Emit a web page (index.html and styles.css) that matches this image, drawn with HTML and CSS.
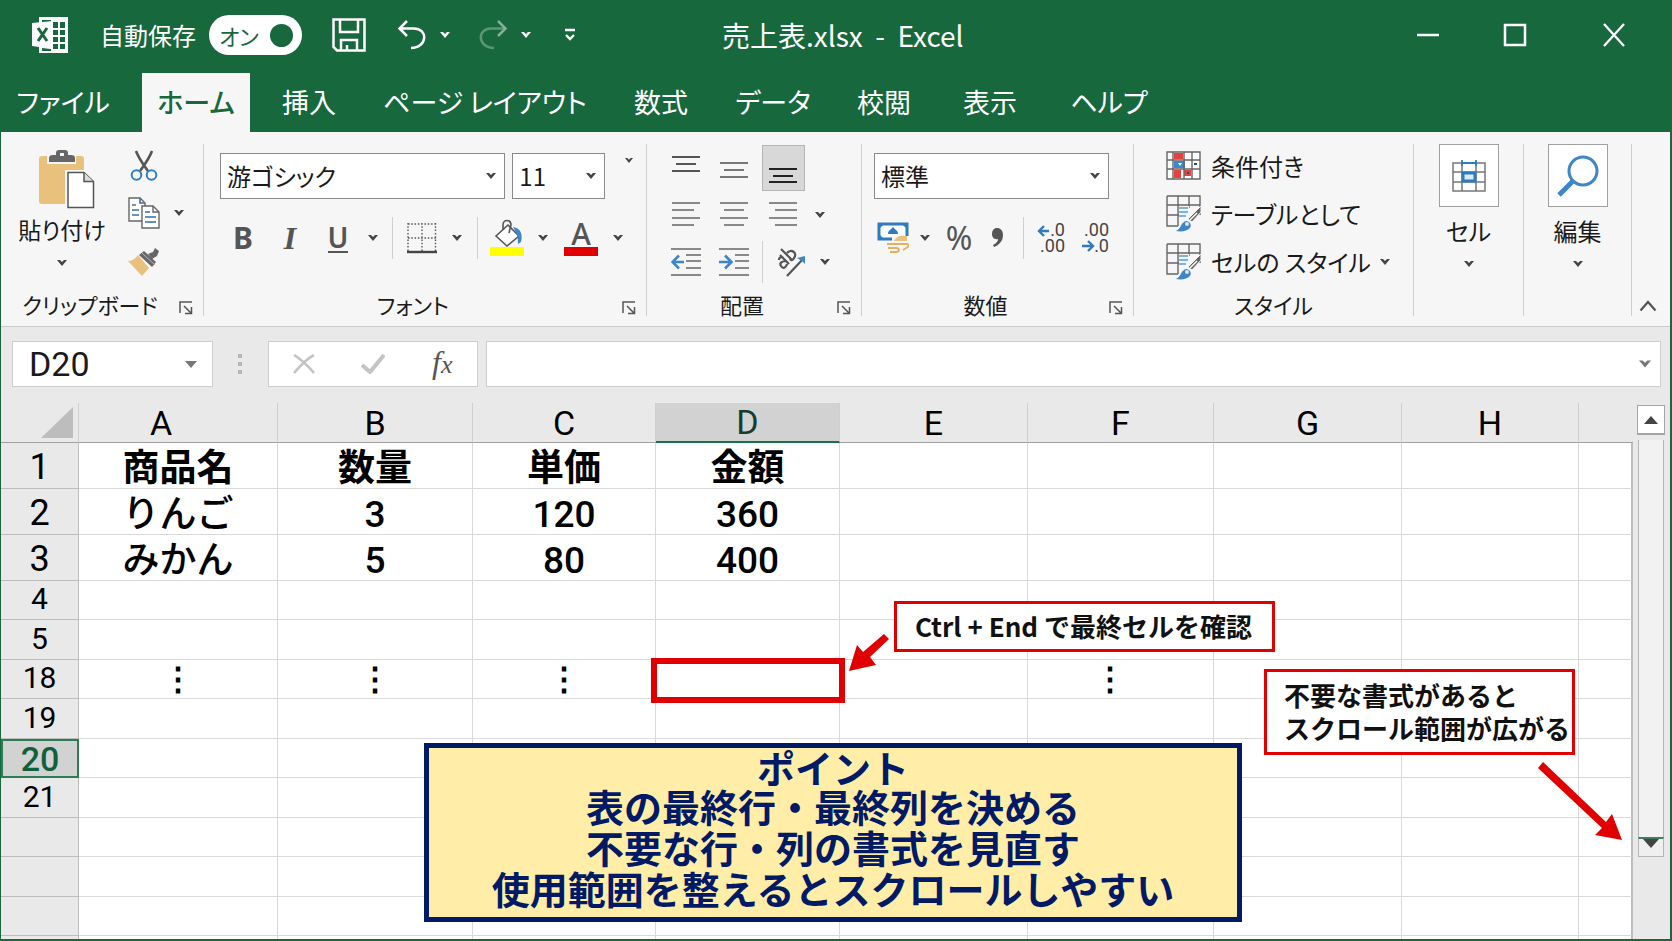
FILE: index.html
```
<!DOCTYPE html>
<html lang="ja">
<head>
    <meta charset="UTF-8">
    <meta name="viewport" content="width=device-width, initial-scale=1.0">
    <title>売上表.xlsx - Excel</title>
    <link rel="stylesheet" href="styles.css">
</head>
<body>
    <!-- Shared icon shapes -->
    <svg class="sprite" aria-hidden="true">
        <symbol id="caret" viewBox="0 0 10 6"><path d="M0 0h3l2 2 2-2h3L5 6z" fill="currentColor"/></symbol>
        <symbol id="launcher" viewBox="0 0 14 14"><path d="M1 12V1h12M5 5l7 7M12.500 6v6.500H6" fill="none" stroke="#555" stroke-width="1.500"/></symbol>
        <symbol id="table-brush" viewBox="0 0 36 37">
            <path d="M1 1h33v19M1 1v30h11M1 10h33M1 20h12M12 1v30M23 1v12" fill="none" stroke="#666" stroke-width="1.400"/>
            <path d="M13 11h10v11H13z" fill="#eef5fc"/>
            <path d="M13 13h9M13 17h9M13 21h7" stroke="#5b9bd5" stroke-width="1.500"/>
            <path d="M35 11v6l-9 10-4-3z" fill="#666" stroke="#f6f6f6" stroke-width="1"/>
            <path d="M31 18l-7 7" stroke="#fff" stroke-width="1.500"/>
            <path d="M10 36c5-2 5-9 10-10 4 0 6 4 4 7-3 3-8 4-14 3z" fill="#3f86c9"/>
            <circle cx="21" cy="29" r="2" fill="#d6e9f8"/>
        </symbol>
    </svg>

    <div class="window">
        <header class="titlebar">
            <svg class="logo" width="36" height="36" viewBox="0 0 36 36" aria-hidden="true">
                <path d="M7 0h29v36H7z" fill="#fff"/>
                <path d="M21 5h5v6h-5zM28 5h5v6h-5zM21 13h5v5h-5zM28 13h5v5h-5zM21 20h5v5h-5zM28 20h5v5h-5zM21 27h5v5h-5zM28 27h5v5h-5zM10 3h9v2h-9zM10 31l9 1v2h-9z" fill="#18683e"/>
                <path d="M0 6l21-2v28L0 29z" fill="#fff"/>
                <path d="M6 11l9 13M15 11L6 24" stroke="#18683e" stroke-width="3"/>
            </svg>
            <span class="autosave-label" id="autosave-label">自動保存</span>
            <label class="toggle">オン<input type="checkbox" aria-labelledby="autosave-label" checked></label>
            <button class="save" aria-label="上書き保存">
                <svg width="34" height="34" viewBox="0 0 34 34"><path d="M1.500 1.500h31v31H5l-3.500-3.500zM8 2v12h18V2M9 32V22h16v10M15 32v-5" fill="none" stroke="#fff" stroke-width="2.500"/></svg>
            </button>
            <button class="undo" aria-label="元に戻す">
                <svg width="28" height="30" viewBox="0 0 28 30"><path d="M9 1L1.500 8.500 9 16M2 8.500h14c14 0 14 19-3 19.500" fill="none" stroke="#fff" stroke-width="2.500"/></svg>
            </button>
            <button class="title-caret" aria-label="元に戻すの一覧"><svg class="caret"><use href="#caret"/></svg></button>
            <button class="redo" aria-label="やり直し">
                <svg width="28" height="30" viewBox="0 0 28 30"><path d="M26 8.500H12C-2 8.500-2 27.500 15 28" fill="none" stroke="#5d9577" stroke-width="2.500"/><path d="M19 1l7.500 7.500L19 16" fill="none" stroke="#86b198" stroke-width="2.500"/></svg>
            </button>
            <button class="title-caret" aria-label="やり直しの一覧"><svg class="caret"><use href="#caret"/></svg></button>
            <button class="customize" aria-label="クイック アクセス ツール バーのカスタマイズ">
                <svg width="12" height="14" viewBox="0 0 12 14"><path d="M1 2h10M2 7l4 4 4-4" fill="none" stroke="#fff" stroke-width="2.400"/></svg>
            </button>
            <h1 class="title">売上表.xlsx&nbsp; - &nbsp;Excel</h1>
            <div class="window-buttons">
                <button aria-label="最小化"><svg width="24" height="24" viewBox="0 0 24 24"><path d="M1 12h22" stroke="#fff" stroke-width="2.500"/></svg></button>
                <button aria-label="最大化"><svg width="24" height="24" viewBox="0 0 24 24"><path d="M2 2h20v20H2z" fill="none" stroke="#fff" stroke-width="2.500"/></svg></button>
                <button class="close" aria-label="閉じる"><svg width="24" height="24" viewBox="0 0 24 24"><path d="M2 1l20 22M22 1L2 23" stroke="#fff" stroke-width="2.300"/></svg></button>
            </div>
        </header>

        <nav class="tabs">
            <button>ファイル</button>
            <button class="active">ホーム</button>
            <button>挿入</button>
            <button>ページ レイアウト</button>
            <button>数式</button>
            <button>データ</button>
            <button>校閲</button>
            <button>表示</button>
            <button>ヘルプ</button>
        </nav>

        <div class="ribbon">
            <section class="group group-clipboard">
                <div class="clipboard-body">
                    <button class="paste">
                        <svg width="56" height="60" viewBox="0 0 56 60">
                            <path d="M3 6h39q3 0 3 3v42q0 3-3 3H3q-3 0-3-3V9q0-3 3-3z" fill="#eac17c"/>
                            <path d="M8 5h29v9H8z" fill="#f6f6f6"/>
                            <path d="M10 12V8q0-3 4-3h3V3q0-3 3-3h6q3 0 3 3v2h3q4 0 4 3v4z" fill="#666"/>
                            <path d="M21 3h4v3h-4z" fill="#f6f6f6"/>
                            <path d="M26 20h31v40H26z" fill="#f6f6f6"/>
                            <path d="M29 22.500h16l9.500 9v26H29z" fill="#fff" stroke="#555" stroke-width="1.500"/>
                            <path d="M45 22.500v9h9.500" fill="#ddd" stroke="#555" stroke-width="1.500"/>
                        </svg>
                        <span>貼り付け</span>
                        <svg class="caret"><use href="#caret"/></svg>
                    </button>
                    <div class="clipboard-tools">
                        <button aria-label="切り取り">
                            <svg width="28" height="32" viewBox="0 0 28 32">
                                <path d="M6 1c3 8 7 13 12 20M22 1c-3 8-7 13-12 20" stroke="#555" stroke-width="2.600" fill="none"/>
                                <circle cx="6.500" cy="25" r="4.800" fill="none" stroke="#2f7fc8" stroke-width="2"/>
                                <circle cx="21.500" cy="25" r="4.800" fill="none" stroke="#2f7fc8" stroke-width="2"/>
                            </svg>
                        </button>
                        <span></span>
                        <button aria-label="コピー">
                            <svg width="32" height="32" viewBox="0 0 32 32">
                                <path d="M1 1h11l5 5v18H1z" fill="#fff" stroke="#666" stroke-width="1.400"/>
                                <path d="M12 1v5h5M4 8h4M4 13h7M4 18h7" fill="none" stroke="#3f6f9f" stroke-width="1.600"/>
                                <path d="M14 9h11l6 6v16H14z" fill="#fff" stroke="#666" stroke-width="1.400"/>
                                <path d="M25 9v6h6" fill="none" stroke="#666" stroke-width="1.400"/>
                                <path d="M17 15h5M17 20h11M17 25h11" stroke="#2f6fae" stroke-width="1.600"/>
                            </svg>
                        </button>
                        <button aria-label="コピーの一覧"><svg class="caret"><use href="#caret"/></svg></button>
                        <button aria-label="書式のコピー/貼り付け">
                            <svg width="32" height="30" viewBox="0 0 32 30">
                                <path d="M0 14q6 0 10-6l11 13-7 8z" fill="#eac17c"/>
                                <path d="M11 8l5-4 12 11-4 5z" fill="#666"/>
                                <path d="M20 7l5-2 2-4 4 3-2 5-5 3z" fill="#666"/>
                                <path d="M14 6l13 12" stroke="#bbb" stroke-width="1"/>
                            </svg>
                        </button>
                    </div>
                </div>
                <footer><span>クリップボード</span><button aria-label="クリップボードの詳細"><svg class="launcher"><use href="#launcher"/></svg></button></footer>
            </section>

            <section class="group group-font">
                <div class="combo-row">
                    <div class="combo combo-font">
                        <select aria-label="フォント"><option>游ゴシック</option></select>
                        <svg class="caret"><use href="#caret"/></svg>
                    </div>
                    <div class="combo combo-size">
                        <select aria-label="フォント サイズ"><option>11</option></select>
                        <svg class="caret"><use href="#caret"/></svg>
                    </div>
                    <button class="font-more" aria-label="フォントその他"><svg class="caret caret-small"><use href="#caret"/></svg></button>
                </div>
                <div class="font-tools">
                    <button class="bold" aria-label="太字">B</button>
                    <button class="italic" aria-label="斜体">I</button>
                    <button class="underline" aria-label="下線"><span>U</span></button>
                    <button aria-label="下線の一覧"><svg class="caret"><use href="#caret"/></svg></button>
                    <span class="divider"></span>
                    <button aria-label="罫線">
                        <svg width="30" height="32" viewBox="0 0 30 32">
                            <path d="M1 2h28M1 16h28M1 1v28M15 1v28M28.500 1v28" fill="none" stroke="#555" stroke-width="1.400" stroke-dasharray="1.500 1.800"/>
                            <path d="M0 30h30" stroke="#444" stroke-width="2.400"/>
                        </svg>
                    </button>
                    <button aria-label="罫線の一覧"><svg class="caret"><use href="#caret"/></svg></button>
                    <span class="divider"></span>
                    <button aria-label="塗りつぶしの色">
                        <svg width="34" height="38" viewBox="0 0 34 38">
                            <path d="M6 17L18 6l11 11-12 10z" fill="#fff" stroke="#555" stroke-width="1.600"/>
                            <path d="M13 11V6c0-6 8-6 8 0l-2 8" fill="none" stroke="#555" stroke-width="1.600"/>
                            <path d="M23 8c8 1 10 8 8 15l-3 2c0-7-1-11-5-17z" fill="#3f86c9"/>
                            <path d="M0 28h34v9H0z" fill="#ffff00"/>
                        </svg>
                    </button>
                    <button aria-label="塗りつぶしの色の一覧"><svg class="caret"><use href="#caret"/></svg></button>
                    <button class="font-color" aria-label="フォントの色">A</button>
                    <button aria-label="フォントの色の一覧"><svg class="caret"><use href="#caret"/></svg></button>
                </div>
                <footer><span>フォント</span><button aria-label="フォントの詳細"><svg class="launcher"><use href="#launcher"/></svg></button></footer>
            </section>

            <section class="group group-align">
                <div class="align-row">
                    <button aria-label="上揃え"><svg width="28" height="26" viewBox="0 0 28 26"><path d="M0 2h28M4 9h20M0 16h28" stroke="#555" stroke-width="1.800"/></svg></button>
                    <button aria-label="上下中央揃え"><svg width="28" height="26" viewBox="0 0 28 26"><path d="M0 8h28M4 15h20M0 22h28" stroke="#777" stroke-width="1.800"/></svg></button>
                    <button class="pressed" aria-label="下揃え"><svg width="28" height="30" viewBox="0 0 28 30"><path d="M0 16h28M4 23h20M0 29h28" stroke="#222" stroke-width="2.200"/></svg></button>
                </div>
                <div class="align-row">
                    <button aria-label="左揃え"><svg width="28" height="26" viewBox="0 0 28 26"><path d="M0 1h28M0 8h22M0 16h28M0 23h22" stroke="#666" stroke-width="1.700"/></svg></button>
                    <button aria-label="中央揃え"><svg width="28" height="26" viewBox="0 0 28 26"><path d="M0 1h28M4 8h20M0 16h28M4 23h20" stroke="#666" stroke-width="1.700"/></svg></button>
                    <button aria-label="右揃え"><svg width="28" height="26" viewBox="0 0 28 26"><path d="M0 1h28M6 8h22M0 16h28M6 23h22" stroke="#666" stroke-width="1.700"/></svg></button>
                    <button aria-label="配置の一覧"><svg class="caret"><use href="#caret"/></svg></button>
                </div>
                <div class="align-row indent-row">
                    <button aria-label="インデントを減らす">
                        <svg width="30" height="30" viewBox="0 0 30 30"><path d="M0 2h30M15 8h15M15 14h15M15 21h15M0 28h30" stroke="#666" stroke-width="1.700"/><path d="M13 15H2M8 8.500L1.500 15 8 21.500" fill="none" stroke="#3f86c9" stroke-width="2.600"/></svg>
                    </button>
                    <button aria-label="インデントを増やす">
                        <svg width="30" height="30" viewBox="0 0 30 30"><path d="M0 2h30M16 8h14M16 14h14M16 21h14M0 28h30" stroke="#666" stroke-width="1.700"/><path d="M0 15h12M6 8.500l6.500 6.500L6 21.500" fill="none" stroke="#3f86c9" stroke-width="2.600"/></svg>
                    </button>
                    <span class="divider"></span>
                    <button aria-label="方向">
                        <svg width="30" height="30" viewBox="0 0 30 30">
                            <g fill="none" stroke="#555" stroke-width="2.200">
                                <path d="M4 8l9 9M3 13c0-3 3-4 5-1M10 14c-4 0-7 2-5 5s5 2 6-2"/>
                                <path d="M5 2l11 11M11 6c4-5 11 0 7 5-1 2-3 3-4 1"/>
                                <path d="M11 29L27 12"/>
                            </g>
                            <path d="M21 11l8-2v8l-3-3z" fill="#3f86c9"/>
                        </svg>
                    </button>
                    <button aria-label="方向の一覧"><svg class="caret"><use href="#caret"/></svg></button>
                </div>
                <footer><span>配置</span><button aria-label="配置の詳細"><svg class="launcher"><use href="#launcher"/></svg></button></footer>
            </section>

            <section class="group group-number">
                <div class="combo-row">
                    <div class="combo combo-number">
                        <select aria-label="数値の書式"><option>標準</option></select>
                        <svg class="caret"><use href="#caret"/></svg>
                    </div>
                </div>
                <div class="number-tools">
                    <button aria-label="通貨表示形式">
                        <svg width="32" height="32" viewBox="0 0 32 32">
                            <path d="M2 2h28v15H2z" fill="#fff" stroke="#2f7bc0" stroke-width="3"/>
                            <path d="M2 2h5L2 7zM30 2h-5l5 5zM2 17h5l-5-5z" fill="#2f7bc0"/>
                            <path d="M11 12c0-4 3-4 5-7 2 3 5 3 5 7z" fill="#2f7bc0"/>
                            <path d="M15 14h17v18H10V20h5z" fill="#f6f6f6"/>
                            <path d="M17 19c2-5 7-6 13-5v5z" fill="#eac17c"/>
                            <path d="M10 22h20q2 0 1 3l-5 3M11 26h8q3 0 3 2t-3 2h-6" fill="none" stroke="#e5b15f" stroke-width="1.800"/>
                        </svg>
                    </button>
                    <button aria-label="通貨の一覧"><svg class="caret"><use href="#caret"/></svg></button>
                    <button class="percent" aria-label="パーセント スタイル">%</button>
                    <button aria-label="桁区切りスタイル">
                        <svg width="12" height="20" viewBox="0 0 12 20"><path d="M0 6c0-8 11-8 11 1 0 6-4 10-9 12l-1-2c4-2 5-4 5-6-4 1-6-2-6-5z" fill="#555"/></svg>
                    </button>
                    <span class="divider"></span>
                    <button aria-label="小数点以下の表示桁数を増やす">
                        <svg class="decimals" width="30" height="38" viewBox="0 0 30 38"><text x="28" y="17" text-anchor="end">.0</text><text x="28" y="33" text-anchor="end">.00</text><path d="M12 12H2M7 7l-5 5 5 5" fill="none" stroke="#2f7bc0" stroke-width="2.400"/></svg>
                    </button>
                    <button aria-label="小数点以下の表示桁数を減らす">
                        <svg class="decimals" width="30" height="38" viewBox="0 0 30 38"><text x="28" y="17" text-anchor="end">.00</text><text x="28" y="33" text-anchor="end">.0</text><path d="M1 27h11M7 22l5 5-5 5" fill="none" stroke="#2f7bc0" stroke-width="2.400"/></svg>
                    </button>
                </div>
                <footer><span>数値</span><button aria-label="数値の詳細"><svg class="launcher"><use href="#launcher"/></svg></button></footer>
            </section>

            <section class="group group-styles">
                <div class="styles-list">
                    <button>
                        <svg width="36" height="29" viewBox="0 0 36 29">
                            <path d="M1 1h33v27H1z" fill="#fff"/>
                            <path d="M8 2h9v6H8zM8 19h7v8H8zM18 19h7v6h-7z" fill="#e5413e"/>
                            <path d="M8 10h11v7H8z" fill="#3f86c9"/>
                            <path d="M12 12h4l-2 3z" fill="#fff"/>
                            <path d="M21 22h2M28 13h3" stroke="#23527c" stroke-width="2"/>
                            <path d="M1 1h33v27H1zM1 9h33M1 18h33M7 1v27M18 1v27M26 1v27" fill="none" stroke="#666" stroke-width="1.400"/>
                        </svg>
                        <span>条件付き</span>
                    </button>
                    <button><svg width="36" height="37"><use href="#table-brush"/></svg><span>テーブルとして</span></button>
                    <button><svg width="36" height="37"><use href="#table-brush"/></svg><span>セルの スタイル</span><svg class="caret"><use href="#caret"/></svg></button>
                </div>
                <footer><span>スタイル</span></footer>
            </section>

            <section class="group group-cells">
                <button class="tall">
                    <span class="tall-icon">
                        <svg width="34" height="34" viewBox="0 0 34 34">
                            <path d="M1 4h32v28H1zM1 13h32M1 23h32M10 4v28M24 4v28" fill="none" stroke="#777" stroke-width="1.500"/>
                            <path d="M10 2h14v5H10z" fill="#fff"/>
                            <path d="M10 1v6M24 1v6M10 4h14" fill="none" stroke="#2f7bc0" stroke-width="1.800"/>
                            <path d="M11 14h12v8H11z" fill="#dcebf8" stroke="#2f7bc0" stroke-width="3"/>
                        </svg>
                    </span>
                    <span>セル</span>
                    <svg class="caret"><use href="#caret"/></svg>
                </button>
            </section>

            <section class="group group-edit">
                <button class="tall">
                    <span class="tall-icon">
                        <svg width="42" height="42" viewBox="0 0 42 42">
                            <circle cx="26" cy="16" r="14" fill="none" stroke="#3f86c9" stroke-width="3"/>
                            <path d="M16 26L2 40" stroke="#3f86c9" stroke-width="5"/>
                        </svg>
                    </span>
                    <span>編集</span>
                    <svg class="caret"><use href="#caret"/></svg>
                </button>
            </section>

            <button class="collapse" aria-label="リボンを折りたたむ">
                <svg width="18" height="12" viewBox="0 0 18 12"><path d="M1.500 10.500L9 2l7.500 8.500" fill="none" stroke="#555" stroke-width="2.200"/></svg>
            </button>
        </div>

        <div class="formula-bar">
            <div class="name-box">
                <input type="text" aria-label="名前ボックス" value="D20">
                <svg width="12" height="7" viewBox="0 0 12 7"><path d="M0 0h12L6 7z" fill="#777"/></svg>
            </div>
            <svg class="grip" width="4" height="20" viewBox="0 0 4 20"><path d="M0 0h4v4H0zM0 8h4v4H0zM0 16h4v4H0z" fill="#b5b5b5"/></svg>
            <div class="formula-buttons">
                <button aria-label="キャンセル"><svg width="22" height="20" viewBox="0 0 22 20"><path d="M1 1c8 5 14 11 20 18M21 1C13 5 7 12 1 19" fill="none" stroke="#c4c4c4" stroke-width="2.600"/></svg></button>
                <button aria-label="入力"><svg width="24" height="20" viewBox="0 0 24 20"><path d="M1 11l8 7L23 1" fill="none" stroke="#c4c4c4" stroke-width="4"/></svg></button>
                <button class="fx" aria-label="関数の挿入">f<small>x</small></button>
            </div>
            <div class="formula-input">
                <input type="text" aria-label="数式バー">
                <svg class="caret caret-wide"><use href="#caret"/></svg>
            </div>
        </div>

        <main class="sheet">
            <div class="grid">
                <table>
                    <colgroup>
                        <col class="w-head"><col class="w-a"><col class="w-b"><col class="w-c"><col class="w-d"><col class="w-e"><col class="w-f"><col class="w-g"><col class="w-h"><col>
                    </colgroup>
                    <thead>
                        <tr>
                            <th class="corner"><svg width="32" height="31" viewBox="0 0 32 31"><path d="M32 0v31H0z" fill="#bdbdbd"/></svg></th>
                            <th class="col-a">A</th><th>B</th><th>C</th><th class="selected">D</th><th>E</th><th>F</th><th>G</th><th>H</th><th></th>
                        </tr>
                    </thead>
                    <tbody class="data-rows">
                        <tr class="headings"><th>1</th><td>商品名</td><td>数量</td><td>単価</td><td>金額</td><td></td><td></td><td></td><td></td><td></td></tr>
                        <tr><th>2</th><td>りんご</td><td>3</td><td>120</td><td>360</td><td></td><td></td><td></td><td></td><td></td></tr>
                        <tr><th>3</th><td>みかん</td><td>5</td><td>80</td><td>400</td><td></td><td></td><td></td><td></td><td></td></tr>
                    </tbody>
                    <tbody class="blank-rows">
                        <tr><th>4</th><td></td><td></td><td></td><td></td><td></td><td></td><td></td><td></td><td></td></tr>
                        <tr><th>5</th><td></td><td></td><td></td><td></td><td></td><td></td><td></td><td></td><td></td></tr>
                        <tr class="more"><th>18</th><td>⋮</td><td>⋮</td><td>⋮</td><td></td><td></td><td class="more-f">⋮</td><td></td><td></td><td></td></tr>
                        <tr><th>19</th><td></td><td></td><td></td><td></td><td></td><td></td><td></td><td></td><td></td></tr>
                        <tr><th class="selected">20</th><td></td><td></td><td></td><td></td><td></td><td></td><td></td><td></td><td></td></tr>
                        <tr><th>21</th><td></td><td></td><td></td><td></td><td></td><td></td><td></td><td></td><td></td></tr>
                        <tr><th></th><td></td><td></td><td></td><td></td><td></td><td></td><td></td><td></td><td></td></tr>
                        <tr><th></th><td></td><td></td><td></td><td></td><td></td><td></td><td></td><td></td><td></td></tr>
                        <tr><th></th><td></td><td></td><td></td><td></td><td></td><td></td><td></td><td></td><td></td></tr>
                        <tr><th></th><td></td><td></td><td></td><td></td><td></td><td></td><td></td><td></td><td></td></tr>
                    </tbody>
                </table>
            </div>

            <div class="scrollbar">
                <button class="scroll-up" aria-label="上へスクロール"><svg width="14" height="8" viewBox="0 0 14 8"><path d="M0 8h14L7 0z" fill="#444"/></svg></button>
                <div class="track"></div>
                <button class="scroll-down" aria-label="下へスクロール"><svg width="16" height="9" viewBox="0 0 16 9"><path d="M0 0h16L8 9z" fill="#444"/></svg></button>
            </div>

            <!-- Notes laid over the cells -->
            <div class="last-cell"></div>
            <p class="note note-last">Ctrl + End で最終セルを確認</p>
            <svg class="arrow arrow-last" width="44" height="40" viewBox="0 0 44 40"><path d="M36 1l5 5-19 18 6 8L1 38 9 12l6 7z" fill="#e00000"/></svg>
            <p class="note note-scroll">不要な書式があると<br>スクロール範囲が広がる</p>
            <svg class="arrow arrow-scroll" width="86" height="80" viewBox="0 0 86 80"><path d="M6 1L1 7l64 60-7 7 27 5L75 53l-6 8z" fill="#e00000"/></svg>
            <aside class="point">
                <h2>ポイント</h2>
                <p>表の最終行・最終列を決める</p>
                <p>不要な行・列の書式を見直す</p>
                <p>使用範囲を整えるとスクロールしやすい</p>
            </aside>
        </main>
    </div>
</body>
</html>
```
FILE: styles.css
```
:root {
    --green: #18683e;
    --ribbon: #f6f6f6;
    --chrome: #e9e9e9;
    --line: #d9d9d9;
    --red: #e00000;
    --navy: #001a66;
}

* {
    box-sizing: border-box;
}

body {
    margin: 0;
    font-family: "Noto Sans CJK JP", "Noto Sans", sans-serif;
    font-size: 24px;
    line-height: 1;
    color: #1a1a1a;
}

button, select, input {
    font: inherit;
    color: inherit;
}

button {
    display: flex;
    align-items: center;
    justify-content: center;
    margin: 0;
    padding: 0;
    border: none;
    background: none;
    cursor: pointer;
}

svg {
    display: block;
    flex: none;
}

.sprite {
    display: none;
}

.caret {
    width: 10px;
    height: 6px;
    color: #444;
}

.caret-small {
    width: 8px;
    height: 5px;
}

.caret-wide {
    width: 12px;
    height: 8px;
    color: #777;
}

.window {
    display: flex;
    flex-direction: column;
    height: 100vh;
    overflow: hidden;
    border: solid var(--green);
    border-width: 0 2px 2px 1px;
    background: var(--chrome);
}

/* Title bar */
.titlebar {
    display: flex;
    align-items: center;
    height: 73px;
    padding: 0 32px 3px 31px;
    background: var(--green);
    color: #fff;
}

.autosave-label {
    margin-left: 32px;
}

.toggle {
    display: flex;
    align-items: center;
    justify-content: space-between;
    width: 93px;
    height: 40px;
    margin-left: 13px;
    padding: 0 9px 0 10px;
    border-radius: 20px;
    background: #fff;
    color: var(--green);
    font-size: 22px;
    font-feature-settings: "palt";
}

.toggle input {
    appearance: none;
    width: 23px;
    height: 23px;
    margin: 0;
    border-radius: 50%;
    background: var(--green);
}

.save {
    margin-left: 30px;
}

.undo {
    margin-left: 32px;
}

.redo {
    margin-left: 15px;
}

.title-caret {
    width: 38px;
    height: 40px;
}

.title-caret .caret {
    color: #fff;
}

.titlebar .customize {
    margin-left: 19px;
}

.title {
    margin: 0 0 0 146px;
    font-size: 28px;
    font-weight: 400;
}

.window-buttons {
    display: flex;
    gap: 63px;
    margin-left: auto;
}

.window-buttons .close {
    width: 48px;
}

/* Tabs */
.tabs {
    display: grid;
    grid-template-columns: 124px 125px 118px 234px 118px 106px 116px 96px 142px;
    height: 59px;
    background: var(--green);
    color: #fff;
    font-size: 27px;
    font-feature-settings: "palt";
}

.tabs button {
    padding-bottom: 2px;
}

.tabs .active {
    margin-left: 17px;
    background: var(--ribbon);
    color: var(--green);
    font-weight: 500;
}

/* Ribbon */
.ribbon {
    display: flex;
    height: 195px;
    padding: 12px 0 10px;
    border-bottom: 1px solid #cacaca;
    background: var(--ribbon);
    font-feature-settings: "palt";
}

.group {
    --indent: 0px;
    display: flex;
    flex-direction: column;
    padding-left: var(--indent);
    border-right: 1px solid #cfcfcf;
}

.group-clipboard {
    width: 203px;
}

.group-font {
    --indent: 16px;
    width: 443px;
}

.group-align {
    --indent: 15px;
    width: 215px;
}

.group-number {
    --indent: 12px;
    width: 272px;
}

.group-styles {
    width: 280px;
}

.group-cells {
    width: 110px;
}

.group-edit {
    width: 108px;
}

.group footer {
    display: flex;
    align-items: center;
    height: 24px;
    margin-top: auto;
    margin-left: calc(var(--indent) * -1);
    padding-right: 10px;
    font-size: 22px;
}

.group footer span {
    flex: 1;
    text-align: center;
    white-space: nowrap;
}

.group-styles footer {
    padding-right: 0;
}

.launcher {
    width: 14px;
    height: 14px;
    margin-top: 8px;
}

.divider {
    justify-self: center;
    width: 1px;
    height: 42px;
    background: #cfcfcf;
}

.clipboard-body {
    display: grid;
    grid-template-columns: 122px 70px;
}

.paste {
    flex-direction: column;
    justify-content: flex-start;
    padding-top: 6px;
}

.paste span {
    margin: 8px 0 19px;
    font-size: 23px;
    white-space: nowrap;
}

.paste > svg:first-child {
    margin-left: 10px;
}

.clipboard-tools {
    display: grid;
    grid-template-columns: 42px 28px;
    grid-template-rows: 44px 50px 48px;
}

.combo-row {
    display: flex;
    gap: 7px;
    padding-top: 9px;
}

.combo {
    display: grid;
    align-items: center;
    height: 46px;
    border: 1px solid #8a8a8a;
    background: #fff;
}

.combo select {
    grid-area: 1 / 1;
    width: 100%;
    height: 100%;
    padding: 0 6px;
    border: none;
    background: none;
    appearance: none;
    font-feature-settings: "palt";
}

.combo .caret {
    grid-area: 1 / 1;
    justify-self: end;
    margin-right: 8px;
    pointer-events: none;
}

.combo-font {
    width: 286px;
}

.combo-size {
    width: 93px;
}

.combo-number {
    width: 235px;
}

.font-more {
    width: 34px;
    height: 14px;
}

.font-tools, .number-tools {
    display: grid;
    align-items: center;
    height: 42px;
    margin-top: 18px;
    color: #555;
}

.font-tools {
    grid-template-columns: 46px 48px 48px 22px 16px 44px 26px 14px 46px 26px 50px 24px;
}

.number-tools {
    grid-template-columns: 37px 27px 42px 36px 14px 44px 44px;
}

.bold {
    font-family: "Noto Sans", sans-serif;
    font-size: 30px;
    font-weight: 700;
}

.italic {
    font-family: "Liberation Serif", serif;
    font-size: 32px;
    font-style: italic;
    font-weight: 700;
}

.underline {
    font-family: "Noto Sans", sans-serif;
    font-size: 28px;
    font-weight: 600;
}

.underline span {
    border-bottom: 2px solid #555;
}

.font-color {
    justify-self: center;
    width: 34px;
    height: 36px;
    border-bottom: 9px solid #e00000;
    font-family: "Noto Sans", sans-serif;
    font-size: 30px;
    font-weight: 500;
}

.percent {
    font-family: "Noto Sans", sans-serif;
    font-size: 32px;
}

.decimals text {
    font-family: Roboto, sans-serif;
    font-size: 18px;
    fill: #444;
}

.align-row {
    display: grid;
    grid-template-columns: 48px 48px 50px 24px;
    align-items: center;
    height: 47px;
}

.indent-row {
    grid-template-columns: 48px 48px 8px 50px 18px;
}

.pressed {
    justify-self: center;
    width: 43px;
    height: 46px;
    border: 1px solid #b5b5b5;
    background: #d8d8d8;
}

.styles-list {
    display: flex;
    flex-direction: column;
    gap: 3px;
    padding-left: 32px;
}

.styles-list button {
    justify-content: flex-start;
    gap: 9px;
    height: 45px;
    padding-bottom: 2px;
    white-space: nowrap;
}

.tall {
    flex-direction: column;
}

.tall-icon {
    display: flex;
    align-items: center;
    justify-content: center;
    width: 60px;
    height: 63px;
    margin-bottom: 12px;
    border: 1px solid #a0a0a0;
    background: #fff;
}

.tall .caret {
    margin-top: 18px;
}

.collapse {
    align-self: flex-end;
    width: 32px;
    height: 20px;
}

/* Formula bar */
.formula-bar {
    display: flex;
    align-items: center;
    height: 76px;
    padding: 0 9px 2px 11px;
}

.name-box, .formula-buttons, .formula-input {
    display: flex;
    align-items: center;
    height: 46px;
    border: 1px solid #cdcdcd;
    background: #fff;
}

.name-box {
    width: 201px;
    padding-right: 15px;
}

.formula-bar input {
    flex: 1;
    width: 100%;
    min-width: 0;
    height: 44px;
    padding: 0 0 0 16px;
    border: none;
    background: none;
    font-family: Roboto, "Noto Sans CJK JP", sans-serif;
    font-size: 34px;
}

.grip {
    margin: 0 26px 0 25px;
}

.formula-buttons {
    justify-content: space-around;
    width: 210px;
}

.formula-buttons button {
    width: 60px;
    height: 44px;
}

.formula-buttons .fx {
    align-items: baseline;
    padding-top: 4px;
    color: #555;
    font-family: "Liberation Serif", serif;
    font-size: 32px;
    font-style: italic;
}

.fx small {
    font-size: 26px;
}

.formula-input {
    flex: 1;
    margin-left: 8px;
    padding-right: 9px;
}

/* Sheet */
.sheet {
    position: relative;
    display: flex;
    flex: 1;
    min-height: 0;
}

.grid {
    flex: 1;
    overflow: hidden;
}

table {
    width: 100%;
    table-layout: fixed;
    border-collapse: separate;
    border-spacing: 0;
    font-family: Roboto, "Noto Sans CJK JP", sans-serif;
}

.w-head { width: 78px; }
.w-a { width: 199px; }
.w-b { width: 195px; }
.w-c { width: 183px; }
.w-d { width: 184px; }
.w-e { width: 188px; }
.w-f { width: 186px; }
.w-g { width: 188px; }
.w-h { width: 177px; }

th, td {
    padding: 0;
    border: solid var(--line);
    border-width: 0 1px 1px 0;
    text-align: center;
    vertical-align: middle;
    line-height: 1;
    color: #000;
}

th {
    border-color: #bdbdbd;
    background: var(--chrome);
    font-weight: 400;
}

td {
    background: #fff;
    font-size: 37px;
}

tr > :last-child {
    border-right: 2px solid #bdbdbd;
}

thead th {
    height: 40px;
    border-color: #cfcfcf;
    border-bottom-color: #a0a0a0;
    font-size: 34px;
}

thead tr > :last-child {
    border-right: none;
}

.corner svg {
    margin-left: 40px;
}

thead .col-a {
    padding-right: 34px;
}

thead .selected {
    border-bottom: 2px solid #157347;
    background: #d2d2d2;
    color: #163d2b;
}

.data-rows tr {
    height: 46px;
}

.data-rows th {
    padding-top: 2px;
    font-size: 36px;
}

.data-rows td {
    padding-top: 6px;
    font-weight: 500;
}

.data-rows .headings td {
    font-weight: 700;
}

.blank-rows tr {
    height: 39px;
}

.blank-rows tr:nth-child(even) {
    height: 40px;
}

.blank-rows th {
    padding-bottom: 2px;
    font-size: 30px;
}

.blank-rows .selected {
    padding-bottom: 0;
    border: 2px solid #2d7d54;
    background: #d2d2d2;
    color: #11603a;
    font-size: 34px;
    font-weight: 500;
}

.blank-rows .more td {
    padding-bottom: 6px;
    font-family: "Noto Sans CJK JP", sans-serif;
    font-size: 32px;
    font-weight: 700;
}

.more .more-f {
    padding-right: 22px;
}

.scrollbar {
    display: flex;
    flex-direction: column;
    width: 37px;
    padding: 2px 5px 82px 4px;
}

.scroll-up {
    height: 30px;
    margin-bottom: 5px;
    border: 1px solid #a5a5a5;
    border-bottom-width: 2px;
    background: #fff;
}

.track {
    flex: 1;
    margin: 0 1px;
    border: solid #b5b5b5;
    border-width: 0 1px;
    background: #f2f2f2;
}

.scroll-down {
    align-items: flex-start;
    height: 20px;
    margin: 0 1px;
    border: 1px solid #b5b5b5;
    border-top: 2px solid #3f7d5e;
    background: #efefef;
}

/* Notes over the cells */
.last-cell, .note, .arrow, .point {
    position: absolute;
}

.last-cell {
    top: 255px;
    left: 650px;
    width: 194px;
    height: 45px;
    border: 6px solid var(--red);
}

.note {
    margin: 0;
    border: 3px solid var(--red);
    background: #fff;
    color: #111;
    font-size: 26px;
    font-weight: 700;
    line-height: 33px;
    white-space: nowrap;
}

.note-last {
    top: 198px;
    left: 893px;
    padding: 5px 20px 7px 18px;
}

.note-scroll {
    top: 266px;
    left: 1263px;
    padding: 6px 2px 8px 17px;
}

.arrow-last {
    top: 230px;
    left: 847px;
}

.arrow-scroll {
    top: 358px;
    left: 1536px;
}

.point {
    top: 340px;
    left: 423px;
    width: 818px;
    padding-bottom: 9px;
    border: 5px solid var(--navy);
    background: #ffeda8;
    color: var(--navy);
    font-size: 38px;
    font-weight: 700;
    line-height: 41px;
    text-align: center;
}

.point h2, .point p {
    margin: 0;
    font-size: inherit;
    font-weight: inherit;
}

.point h2 {
    line-height: 37px;
}
```
